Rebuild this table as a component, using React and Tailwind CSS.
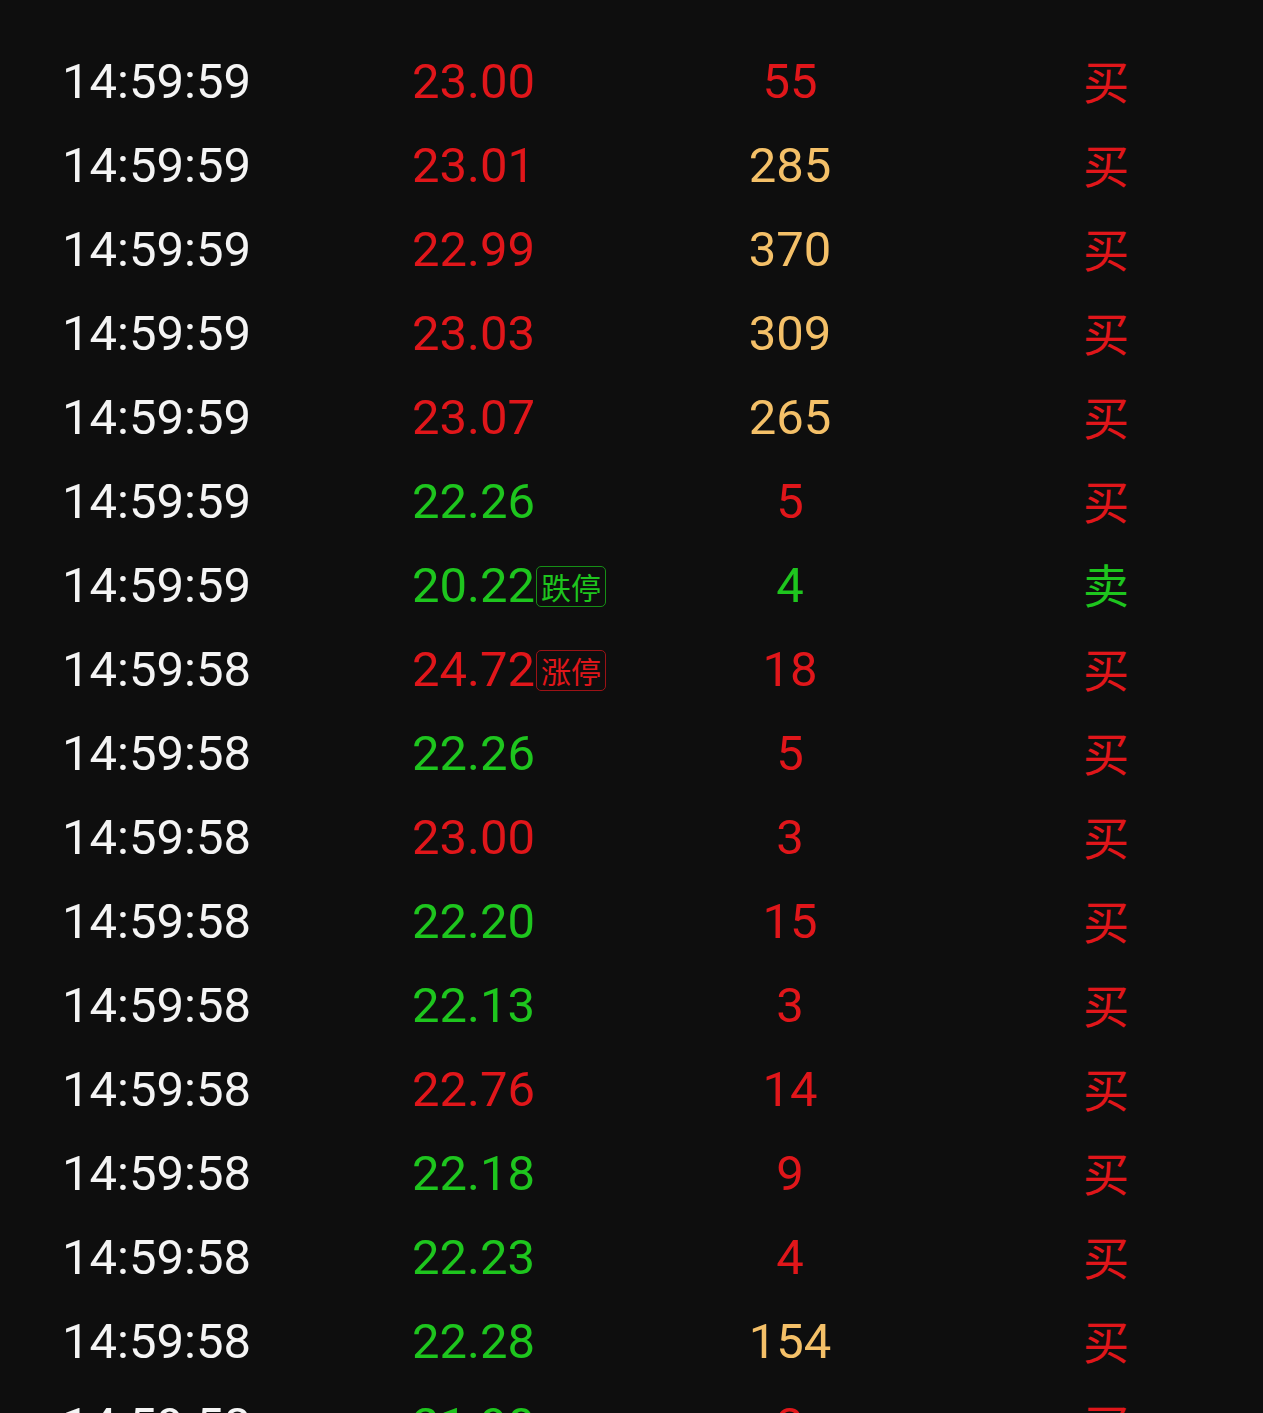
import React from "react";

const RED = "text-[#e0161a]";
const GREEN = "text-[#1ec51e]";
const ORANGE = "text-[#f4c068]";

// [time, price, priceUp, volume, volColor, side, badge]
const trades = [
  ["14:59:59", "23.00", true, "55", "red", "买"],
  ["14:59:59", "23.01", true, "285", "orange", "买"],
  ["14:59:59", "22.99", true, "370", "orange", "买"],
  ["14:59:59", "23.03", true, "309", "orange", "买"],
  ["14:59:59", "23.07", true, "265", "orange", "买"],
  ["14:59:59", "22.26", false, "5", "red", "买"],
  ["14:59:59", "20.22", false, "4", "green", "卖", "跌停"],
  ["14:59:58", "24.72", true, "18", "red", "买", "涨停"],
  ["14:59:58", "22.26", false, "5", "red", "买"],
  ["14:59:58", "23.00", true, "3", "red", "买"],
  ["14:59:58", "22.20", false, "15", "red", "买"],
  ["14:59:58", "22.13", false, "3", "red", "买"],
  ["14:59:58", "22.76", true, "14", "red", "买"],
  ["14:59:58", "22.18", false, "9", "red", "买"],
  ["14:59:58", "22.23", false, "4", "red", "买"],
  ["14:59:58", "22.28", false, "154", "orange", "买"],
  ["14:59:58", "21.90", false, "3", "red", "买"],
];

const volClass = (c) => (c === "orange" ? ORANGE : c === "green" ? GREEN : RED);

const Row = ({ t }) => {
  const [time, price, up, vol, volColor, side, badge] = t;
  return (
    <div className="flex h-[84px] items-center">
      <div className="w-[350px] text-[49px] leading-[84px] text-[#f4f4f4]">{time}</div>
      <div className="flex w-[278px] items-center">
        <span className={`text-[49px] leading-[84px] ${up ? RED : GREEN}`}>{price}</span>
        {badge && (
          <span
            className={`ml-[1px] flex h-[41px] w-[70px] items-center justify-center rounded-[5px] border text-[30px] leading-none ${
              up ? "border-[#9c1216] text-[#e0161a]" : "border-[#168f16] text-[#1ec51e]"
            }`}
            style={{ fontFamily: '"Noto Sans CJK SC", sans-serif' }}
          >
            {badge}
          </span>
        )}
      </div>
      <div className={`w-[200px] text-center text-[49px] leading-[84px] ${volClass(volColor)}`}>{vol}</div>
      <div
        className={`mb-[6px] ml-[116px] w-[200px] text-center text-[46px] leading-[78px] ${side === "卖" ? GREEN : RED}`}
        style={{ fontFamily: '"Noto Sans CJK SC", sans-serif' }}
      >
        {side}
      </div>
    </div>
  );
};

export default function App() {
  return (
    <div
      className="h-[1413px] w-[1263px] overflow-hidden bg-[#0e0e0e] pl-[62px] pt-[40px]"
      style={{ fontFamily: 'Roboto, "Noto Sans CJK SC", sans-serif' }}
    >
      {trades.map((t, i) => (
        <Row key={i} t={t} />
      ))}
    </div>
  );
}
